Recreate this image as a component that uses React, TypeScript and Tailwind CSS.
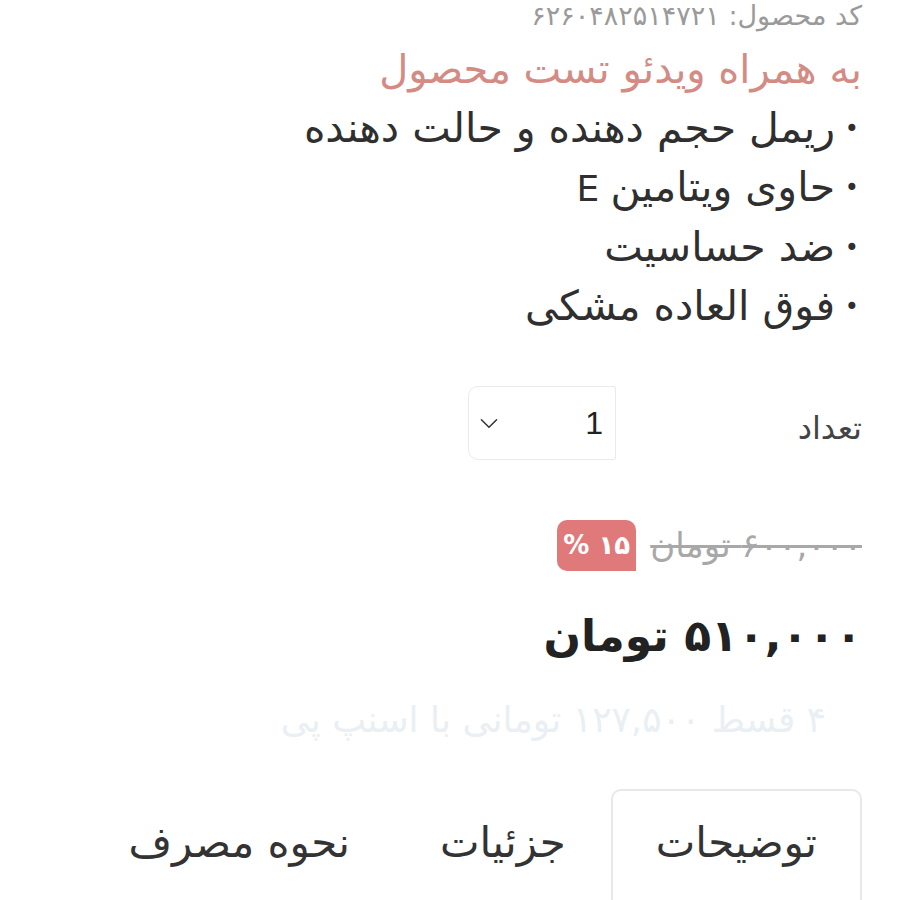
import React, { useState } from "react";

const bullets = ["ریمل حجم دهنده و حالت دهنده", "حاوی ویتامین", "ضد حساسیت", "فوق العاده مشکی"];

const tabs = ["توضیحات", "جزئیات", "نحوه مصرف"];

export default function App() {
  const [qty, setQty] = useState("1");
  const [activeTab, setActiveTab] = useState(0);

  return (
    <div
      dir="rtl"
      className="min-h-screen bg-white pr-[38px] pl-[38px] overflow-hidden"
      style={{ fontFamily: '"DejaVu Sans", "Noto Sans", sans-serif' }}
    >
      {/* product code */}
      <div className="text-[27px] leading-[32px] text-[#9a9a9a]">کد محصول: ۶۲۶۰۴۸۲۵۱۴۷۲۱</div>

      <h2 className="mt-[7px] text-[40px] leading-[60px] text-[#d38b84] font-normal">به همراه ویدئو تست محصول</h2>

      <ul className="text-[41px] leading-[59px] text-[#2f2f2f]">
        {bullets.map((b, i) => (
          <li key={b} className="flex items-center">
            <span className="w-[27px] shrink-0 text-[24px] leading-none pr-[3px]">•</span>
            <span>
              {b}
              {i === 1 && <span className="text-[36px]"> E</span>}
            </span>
          </li>
        ))}
      </ul>

      {/* quantity */}
      <div className="flex items-center mt-[50px]">
        <label className="w-[246px] text-[32px] text-[#444] pt-[10px]">تعداد</label>
        <div className="relative w-[148px] h-[74px] border border-[#ebebeb] rounded-l-[10px] rounded-r-[2px]">
          <select
            value={qty}
            onChange={(e) => setQty(e.target.value)}
            className="appearance-none w-full h-full bg-transparent pr-[12px] text-[32px] text-[#222] outline-none"
            style={{ fontFamily: '"Liberation Sans", sans-serif' }}
          >
            {[1, 2, 3, 4, 5].map((n) => (
              <option key={n} value={String(n)}>
                {n}
              </option>
            ))}
          </select>
          <svg
            className="absolute left-[7px] top-1/2 -translate-y-1/2 pointer-events-none"
            width="26"
            height="26"
            viewBox="0 0 24 24"
            fill="none"
            stroke="#333"
            strokeWidth="1.4"
            strokeLinecap="round"
            strokeLinejoin="round"
          >
            <path d="M5 9l7 7 7-7" />
          </svg>
        </div>
      </div>

      {/* old price + discount */}
      <div className="flex items-center mt-[60px] gap-[14px]">
        <span className="text-[34px] text-[#a8a8a8] line-through decoration-[#a8a8a8]">۶۰۰,۰۰۰ تومان</span>
        <span className="h-[51px] w-[79px] justify-center flex items-center bg-[#e07a7a] text-white text-[26px] font-bold rounded-tl-[10px] rounded-bl-[10px] rounded-tr-[10px]">
          ۱۵ %
        </span>
      </div>

      {/* price */}
      <div className="mt-[35px] text-[44px] leading-[60px] font-bold text-[#222]">۵۱۰,۰۰۰ تومان</div>

      <div className="mt-[34px] pr-[36px] text-[36px] leading-[40px] text-[#e9eff3]">
        ۴ قسط ۱۲۷,۵۰۰ تومانی با اسنپ پی
      </div>

      {/* tabs */}
      <ul className="flex mt-[49px]">
        {tabs.map((t, i) => (
          <li key={t}>
            <button
              onClick={() => setActiveTab(i)}
              className={`px-[43px] pt-[26px] pb-[40px] text-[42px] leading-[52px] text-[#333] rounded-t-[10px] border-t-2 border-l-2 border-r-2 ${
                activeTab === i ? "border-[#e8e8e8]" : "border-transparent"
              }`}
            >
              {t}
            </button>
          </li>
        ))}
      </ul>
    </div>
  );
}
